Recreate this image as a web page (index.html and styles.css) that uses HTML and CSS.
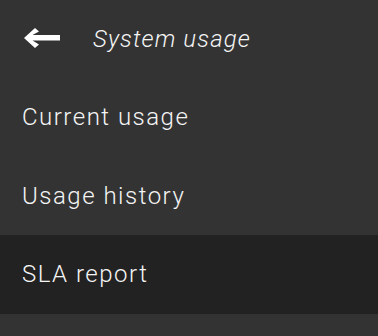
FILE: index.html
```html
<!DOCTYPE html>
<html lang="en">
<head>
  <meta charset="UTF-8">
  <title>System usage</title>
  <link rel="stylesheet" href="styles.css">
</head>
<body>

<div class="menu">
  <div class="menu-header">
    <svg class="back-icon" viewBox="0 0 36 20">
      <polygon points="0,10 11,0 15,3.5 8.5,7 36,7 36,12.5 8.5,12.5 15,16.5 11,20"/>
    </svg>
    <h3 class="title">System usage</h3>
  </div>
  <div class="menu-item">Current usage</div>
  <div class="menu-item">Usage history</div>
  <div class="menu-item active">SLA report</div>
</div>

</body>
</html>
```

FILE: styles.css
```css
body {
  margin: 0;
  background: #333333;
  font-family: Roboto, sans-serif;
  color: #f5f5f5;
}
.menu {
  display: flex;
  flex-direction: column;
}
.menu-header {
  display: flex;
  align-items: center;
  height: 78px;
  padding-left: 24px;
}
.back-icon {
  width: 36px;
  height: 20px;
  margin-top: -2px;
  fill: #ffffff;
}
.title {
  margin: 0 0 0 33px;
  font-size: 24px;
  font-weight: 300;
  font-style: italic;
  letter-spacing: 1.1px;
}
.menu-item {
  display: flex;
  align-items: center;
  height: 78.5px;
  padding-left: 22px;
  font-size: 24px;
  font-weight: 300;
  letter-spacing: 1.5px;
}
.menu-item.active {
  background: #222222;
}
```
